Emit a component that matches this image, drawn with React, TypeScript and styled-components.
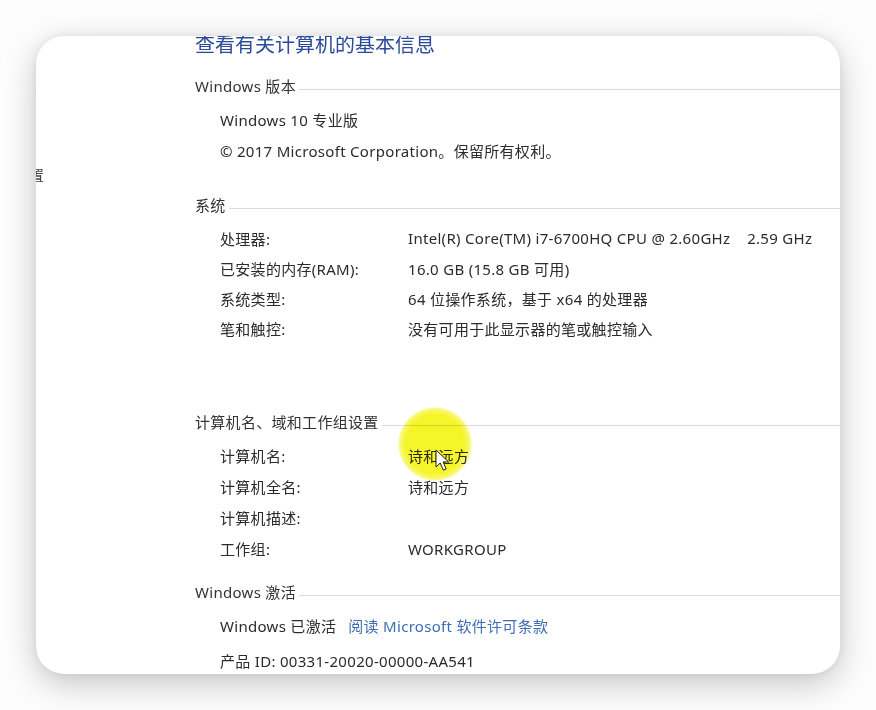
import styled, { createGlobalStyle } from 'styled-components'

/* --------------------- Style --------------------- */
const GlobalStyle = createGlobalStyle`
  html, body {
    margin: 0;
    padding: 0;
    background: #fdfdfd;
  }
  body {
    font-family: "Noto Sans", "Noto Sans CJK SC", sans-serif;
    color: #2b2b2b;
  }
`

const Stage = styled.div`
  width: 876px;
  height: 710px;
  padding: 36px 36px 36px 36px;
  box-sizing: border-box;
`

const Card = styled.div`
  position: relative;
  display: flex;
  width: 804px;
  height: 638px;
  background: #fff;
  border-radius: 28px;
  overflow: hidden;
  box-shadow: 0 10px 34px rgba(0, 0, 0, 0.22), 0 0 8px rgba(0, 0, 0, 0.07);
`

const Sidebar = styled.div`
  width: 8px;
  flex-shrink: 0;
  display: flex;
  justify-content: flex-end;
  align-items: flex-start;
  overflow: hidden;
  padding-top: 129px;
  > span {
    white-space: nowrap;
    font-size: 15px;
    line-height: 20px;
    color: #444;
  }
`

const Main = styled.div`
  flex: 1;
  min-width: 0;
  display: flex;
  flex-direction: column;
  padding-left: 151px;
  letter-spacing: 0.3px;
`

const Title = styled.h1`
  margin: -4px 0 0;
  font-size: 20px;
  font-weight: 400;
  line-height: 26px;
  letter-spacing: 0;
  color: #2b4b98;
  white-space: nowrap;
`

const SectionHead = styled.div<{ $top: number }>`
  display: flex;
  align-items: center;
  height: 22px;
  margin-top: ${(p) => p.$top}px;
  font-size: 15px;
  line-height: 22px;
  color: #333;
  white-space: nowrap;
  &::after {
    content: '';
    flex: 1;
    margin: 6px 0 0 3px;
    border-top: 1px solid #dcdcdc;
  }
`

const Rows = styled.div`
  display: flex;
  flex-direction: column;
  padding: 7px 0 0 25px;
`

const Row = styled.div<{ $h: number }>`
  display: flex;
  align-items: center;
  height: ${(p) => p.$h}px;
  font-size: 15px;
  color: #2b2b2b;
  white-space: pre;
  > .label {
    width: 188px;
    flex-shrink: 0;
  }
`

const Link = styled.a`
  margin-left: 12px;
  color: #3d6db5;
  text-decoration: none;
`

const Highlight = styled.div`
  position: absolute;
  left: 362px;
  top: 371px;
  width: 74px;
  height: 74px;
  border-radius: 50%;
  background: radial-gradient(circle, rgba(244, 244, 30, 0.95) 56%, rgba(244, 244, 30, 0.6) 67%, rgba(244, 244, 30, 0) 72%);
  mix-blend-mode: multiply;
  pointer-events: none;
`

const Cursor = styled.svg`
  position: absolute;
  left: 399px;
  top: 413px;
  width: 15px;
  height: 23px;
`
/* ------------------------------------------------- */

type Item = { label: string; value?: string }

const system: Item[] = [
  { label: '处理器:', value: 'Intel(R) Core(TM) i7-6700HQ CPU @ 2.60GHz    2.59 GHz' },
  { label: '已安装的内存(RAM):', value: '16.0 GB (15.8 GB 可用)' },
  { label: '系统类型:', value: '64 位操作系统，基于 x64 的处理器' },
  { label: '笔和触控:', value: '没有可用于此显示器的笔或触控输入' },
]

const computer: Item[] = [
  { label: '计算机名:', value: '诗和远方' },
  { label: '计算机全名:', value: '诗和远方' },
  { label: '计算机描述:' },
  { label: '工作组:', value: 'WORKGROUP' },
]

const App: React.FC = () => {
  return (
    <Stage>
      <GlobalStyle />
      <Card>
        <Sidebar>
          <span>高级系统设置</span>
        </Sidebar>
        <Main>
          <Title>查看有关计算机的基本信息</Title>

          <SectionHead $top={17}>Windows 版本</SectionHead>
          <Rows>
            <Row $h={31}>Windows 10 专业版</Row>
            <Row $h={31}>© 2017 Microsoft Corporation。保留所有权利。</Row>
          </Rows>

          <SectionHead $top={28}>系统</SectionHead>
          <Rows>
            {system.map((it) => (
              <Row $h={30} key={it.label}>
                <span className="label">{it.label}</span>
                <span>{it.value}</span>
              </Row>
            ))}
          </Rows>

          <SectionHead $top={68}>计算机名、域和工作组设置</SectionHead>
          <Rows>
            {computer.map((it) => (
              <Row $h={31} key={it.label}>
                <span className="label">{it.label}</span>
                <span>{it.value}</span>
              </Row>
            ))}
          </Rows>

          <SectionHead $top={17}>Windows 激活</SectionHead>
          <Rows>
            <Row $h={31}>
              Windows 已激活
              <Link href="#">阅读 Microsoft 软件许可条款</Link>
            </Row>
            <Row $h={39}>产品 ID: 00331-20020-00000-AA541</Row>
          </Rows>
        </Main>

        <Highlight />
        <Cursor viewBox="0 0 15 23">
          <path
            d="M1 1 L1 18 L5.2 14 L8.4 21.2 L11.2 20 L8.1 12.9 L13.6 12.9 Z"
            fill="#fff"
            stroke="#222"
            strokeWidth="1"
            strokeLinejoin="round"
          />
        </Cursor>
      </Card>
    </Stage>
  )
}
export default App
